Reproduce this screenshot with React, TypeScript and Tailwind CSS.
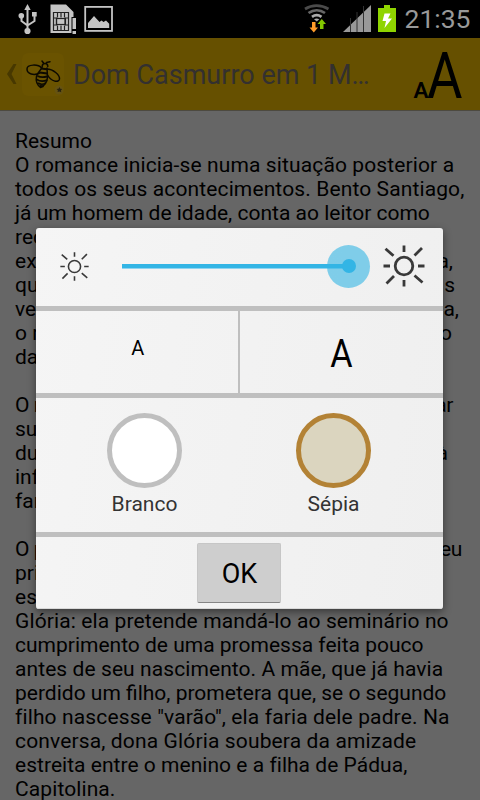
type Line = { left: string; right?: string; width?: number; tracking?: string }

// Lines crossed by the dialog keep only their visible ends
const lines: Line[] = [
  { left: "Resumo" },
  { left: "O romance inicia-se numa situação posterior a", tracking: "tracking-[0.12px]" },
  { left: "todos os seus acontecimentos. Bento Santiago,", tracking: "tracking-[0.12px]" },
  { left: "já um homem de idade, conta ao leitor como" },
  { left: "rec" },
  { left: "ex", right: "a,", width: 438 },
  { left: "qu", right: "s", width: 440 },
  { left: "ve", right: "a,", width: 444 },
  { left: "o r", right: "o", width: 437 },
  { left: "da" },
  { left: "" },
  { left: "O r", right: "ar", width: 438, tracking: "tracking-[-0.4px]" },
  { left: "su" },
  { left: "du", right: "à", width: 433 },
  { left: "inf" },
  { left: "far" },
  { left: "" },
  { left: "O p", right: "eu", width: 447, tracking: "tracking-[-0.4px]" },
  { left: "pri" },
  { left: "es" },
  { left: "Glória: ela pretende mandá-lo ao seminário no", tracking: "tracking-[0.11px]" },
  { left: "cumprimento de uma promessa feita pouco" },
  { left: "antes de seu nascimento. A mãe, que já havia", tracking: "tracking-[0.08px]" },
  { left: "perdido um filho, prometera que, se o segundo" },
  { left: "filho nascesse \"varão\", ela faria dele padre. Na", tracking: "tracking-[0.13px]" },
  { left: "conversa, dona Glória soubera da amizade", tracking: "tracking-[0.14px]" },
  { left: "estreita entre o menino e a filha de Pádua,", tracking: "tracking-[0.03px]" },
  { left: "Capitolina.", tracking: "tracking-[0.1px]" },
]

function StatusBar() {
  return (
    <div className="flex h-[38px] shrink-0 items-center bg-black">
      <svg width="480" height="38" viewBox="0 0 480 38">
        {/* USB */}
        <g fill="none" stroke="#c4c4c4" strokeWidth="2">
          <path d="M27.500 9v21M21.500 17v4l6 4.500M34.500 15v6l-7 4.500" />
        </g>
        <g fill="#c4c4c4">
          <path d="M27.500 4l3.200 6h-6.400z" />
          <circle cx="21.300" cy="15.700" r="2.800" />
          <rect x="32" y="12" width="4.700" height="4.500" />
          <circle cx="27.500" cy="31" r="3.100" />
        </g>
        {/* SIM card */}
        <path d="M50.500 4.500H66L73.500 12v5h-2v16h-21z" fill="#c4c4c4" />
        <g fill="none" stroke="#222" strokeWidth="1.200">
          <path d="M53.500 12.500h15v18h-15zM57.500 12.500v5M61 12.500v5M64.500 12.500v5M57.500 25.500v5M61 25.500v5M64.500 25.500v5M53.500 18h3v7h-3M68.500 18h-3v7h3" />
          <rect x="56.500" y="18.500" width="8.500" height="6" />
        </g>
        <path d="M72.500 18h3.500v11h-3.500zM72.500 31h3.500v3h-3.500z" fill="#c4c4c4" />
        {/* Picture */}
        <rect x="85.200" y="6.900" width="26.800" height="24" fill="none" stroke="#c4c4c4" strokeWidth="1.800" />
        <path d="M88 28v-5l6-7 5.500 6 2-1.500 2 1.500 2.500-1.500 3.200 3.200V28z" fill="#c4c4c4" />
        {/* Wifi */}
        <g fill="none" strokeWidth="2.700">
          <path d="M305 9c7-4.500 16-4.500 23.500 0" stroke="#4a4a4a" />
          <path d="M308.500 13c5-3.600 11.500-3.600 16.500 0" stroke="#666" />
          <path d="M312 16.800c3-2.200 6.500-2.200 9.500 0" stroke="#aaa" />
        </g>
        <path d="M314 19.300c1.800-1.200 3.500-1.200 5.300 0L316.800 21.500z" fill="#aaa" />
        <path d="M312 22h3.500v5.500h2.500l-4.200 5-4.300-5H312z" fill="#ff9c2b" />
        <path d="M320 29h3.500v-5h2.500l-4.200-5-4.300 5h2.500z" fill="#83c800" />
        {/* Signal */}
        <path d="M371 5v27h-28z" fill="#999" />
        <path d="M350.500 18v14M357 12v20M363.500 6v26" stroke="#333" strokeWidth="1" />
        {/* Battery */}
        <path d="M384 5h6v3h6v24h-18V8h6z" fill="#8fd400" />
        <path d="M384.500 13.500h6l-2.500 5h4l-7.500 9.500 1.500-7h-3.500z" fill="#fff" />
        <text x="404.500" y="28" fontSize="26.500" fill="#999" fontFamily="Roboto, sans-serif" textLength="66" lengthAdjust="spacingAndGlyphs">21:35</text>
      </svg>
    </div>
  )
}

function BeeIcon() {
  return (
    <svg width="42" height="43" viewBox="22 53 42 43" className="ml-1">
      <rect x="22" y="53" width="42" height="43" rx="6" fill="#6a5300" />
      <g fill="none" stroke="#0d0a00" strokeWidth="1.500" strokeLinecap="round">
        <path d="M41.500 68c-3-4-14.500-4-14.500 1 0 5 7 7 12.500 4M47 69c6 0 13 6 12.500 10-.5 4-8 3-12-4" />
        <path d="M42.200 66.500c0-4 5.600-4 5.600 0M43.500 63l-1.500-2M46.500 62.500l3.500-.8" />
        <path d="M42 67.500c-1.500 3-4.500 5-5.500 9-.8 4 .8 8.500 4 11 3.500-1 7-6 7-10.500l-.5-9" />
      </g>
      <path d="M41 68.500l6 .8M39.500 72.500l8 1M37.500 76c3 1.500 6 1.500 9.500.5M36.800 79.500c3 2 7 2 10.400.5M38 83c2 1.500 5.500 1.500 7.800 0M39.500 86l4 .3" stroke="#0d0a00" strokeWidth="1.900" fill="none" />
      <circle cx="59" cy="90" r="4.500" fill="#665311" />
      <path d="M59.500 87l.8 1.700 1.900.2-1.200 1.400.2 2-1.700-.9-1.900.7.3-1.800-1.300-1.300 1.900-.2z" fill="#2a2410" />
    </svg>
  )
}

function ActionBar() {
  return (
    <div className="flex h-[73px] shrink-0 items-center border-b border-[#4d4a40] bg-[#665000]">
      <svg width="12" height="24" viewBox="0 0 12 24" className="ml-1.5">
        <path d="M10.500 2h-3L1 12l6.500 10h3L5.500 12z" fill="#473800" />
      </svg>
      <BeeIcon />
      <span className="ml-[9px] mt-0.5 whitespace-nowrap text-[27px] text-[#33302f]">
        Dom Casmurro em 1 M…
      </span>
      <svg width="52" height="72" viewBox="412 38 52 72" className="ml-auto mr-4 shrink-0 overflow-visible">
        <g fontFamily="Roboto, sans-serif" fill="#000">
          <text x="413.500" y="97.500" fontSize="22" fontWeight="600" textLength="15" lengthAdjust="spacingAndGlyphs">A</text>
          <text x="427" y="97.500" fontSize="65" textLength="35.500" lengthAdjust="spacingAndGlyphs">A</text>
        </g>
      </svg>
    </div>
  )
}

function Sun({ size, stroke }: { size: number; stroke: number }) {
  return (
    <svg width={size} height={size} viewBox="0 0 42 42" className="shrink-0" fill="none" stroke="#393939" strokeWidth={stroke}>
      <circle cx="21" cy="21" r="8.800" />
      <path d="M21 .5v6.500M21 35v6.500M.5 21H7M35 21h6.500M2.500 3.800l8 7M39 3l-7.500 7.500M3.500 38.500l7.500-7.500M39.500 37.500l-8-7" />
    </svg>
  )
}

function Theme({ name, ring }: { name: string; ring: string }) {
  return (
    <div className="flex w-[189px] flex-col items-center">
      <div className={`size-[75px] rounded-full border-[5px] ${ring}`} />
      <span className="mt-1 ml-px text-[21px] leading-[25px] text-[#333]">{name}</span>
    </div>
  )
}

function Dialog() {
  return (
    <div className="absolute left-9 top-[228px] flex w-[407px] flex-col rounded-[3px] bg-linear-100 from-[#f5f5f5] to-[#efefef] shadow-[0_3px_9px_rgba(0,0,0,0.45)]">
      <div className="flex h-[78px] items-center">
        <div className="mb-0.5 ml-6">
          <Sun size={29} stroke={2.3} />
        </div>
        <div className="relative mb-0.5 ml-[33px] h-[5px] w-[227px] border-b border-[#8fd4f0] bg-[#33b5e5]">
          <div className="absolute -right-[21px] -top-[19px] flex size-[43px] items-center justify-center rounded-full bg-[#33b5e5]/60">
            <div className="size-[14px] rounded-full bg-[#33b5e5]" />
          </div>
        </div>
        <div className="mb-0.5 ml-[34px]">
          <Sun size={42} stroke={2.8} />
        </div>
      </div>
      <div className="flex h-[92px] border-y-[5px] border-[#bfbfbf] text-black">
        <div className="flex w-[204px] items-center justify-center border-r-2 border-[#bfbfbf] pb-1.5 pl-0.5 text-[21px]">
          <span className="scale-x-95">A</span>
        </div>
        <div className="flex flex-1 items-center justify-center pt-1 text-[38px]">
          <span className="scale-x-90">A</span>
        </div>
      </div>
      <div className="flex h-[139px] justify-center border-b-[5px] border-[#bfbfbf] pr-0.5 pt-[15px]">
        <Theme name="Branco" ring="border-[#bfbfbf] bg-white" />
        <Theme name="Sépia" ring="border-[#b38235] bg-[#dbd5bf]" />
      </div>
      <div className="flex h-[72px] items-center justify-center rounded-b-[3px] border-b border-[#d8d8d8] pr-0.5">
        <button className="h-[60px] w-[84px] rounded-[2px] border border-[#c6c6c6] border-b-[#858585] bg-[#cecece] pl-0.5 pt-1 text-[27px] text-black">
          OK
        </button>
      </div>
    </div>
  )
}

export default function App() {
  return (
    <div className="relative flex h-[800px] w-[480px] flex-col overflow-hidden bg-[#666] font-['Roboto',sans-serif]">
      <StatusBar />
      <ActionBar />
      <div className="px-[15px] pt-[18px] text-[21px] leading-6 text-black">
        {lines.map((line, i) => (
          <div
            key={i}
            className={`flex h-6 justify-between whitespace-pre ${line.tracking ?? ""}`}
            style={{ width: line.width }}
          >
            <span>{line.left}</span>
            {line.right && <span>{line.right}</span>}
          </div>
        ))}
      </div>
      <Dialog />
    </div>
  )
}
